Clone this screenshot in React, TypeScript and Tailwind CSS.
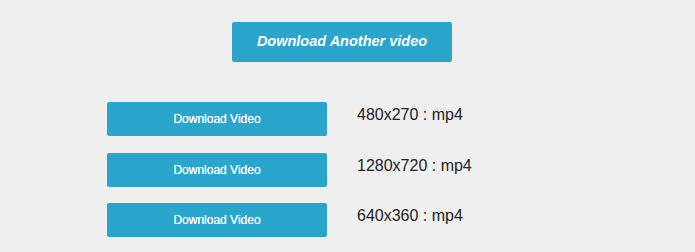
const formats = [
  { res: '480x270', ext: 'mp4' },
  { res: '1280x720', ext: 'mp4' },
  { res: '640x360', ext: 'mp4' },
];

export default function App() {
  return (
    <div className="w-[695px] h-[252px] bg-[#efefef] font-['Liberation_Sans',Arial,sans-serif] pt-[22px]">
      <div className="pl-[232px]">
        <button
          type="button"
          className="w-[220px] h-[40px] bg-[#2aa6cc] rounded-[2px] text-white font-bold italic text-[14.5px] flex items-center justify-center"
        >
          Download Another video
        </button>
      </div>
      <div className="mt-[40px] pl-[107px] flex flex-col gap-[16.5px]">
        {formats.map((f) => (
          <div key={f.res} className="flex items-start">
            <button
              type="button"
              className="w-[220px] h-[34px] bg-[#2aa6cc] rounded-[2px] text-white text-[12px] [text-shadow:0_0_0.4px_#fff] flex items-center justify-center"
            >
              Download Video
            </button>
            <span className="ml-[30px] pt-[1px] text-[16px] leading-[24px] text-[#222]">
              {f.res} : {f.ext}
            </span>
          </div>
        ))}
      </div>
    </div>
  );
}
